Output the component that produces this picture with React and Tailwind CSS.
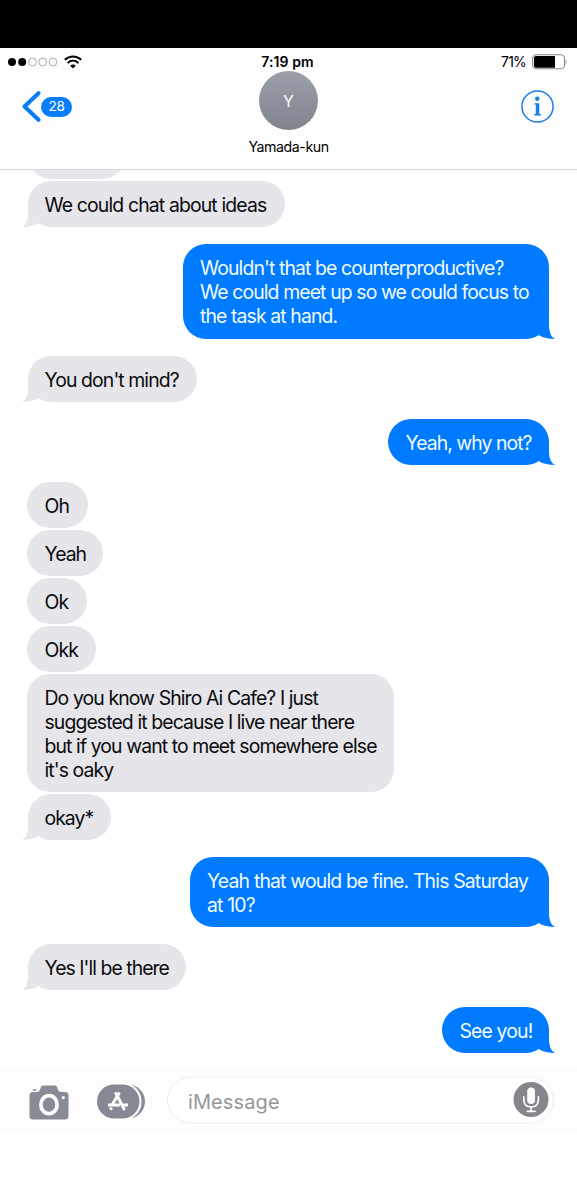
const messages = [
  { lines: ["We could chat about ideas"], tail: true, size: "w-[256.5px] tracking-[-0.85px]", space: "mt-[1.8px]" },
  {
    mine: true,
    lines: ["Wouldn't that be counterproductive?", "We could meet up so we could focus to", "the task at hand."],
    tail: true,
    size: "w-[366.5px] tracking-[-0.88px]",
    space: "mt-[17px]",
  },
  { lines: ["You don't mind?"], tail: true, size: "w-[169px] tracking-[-0.9px]", space: "mt-[17px]" },
  { mine: true, lines: ["Yeah, why not?"], tail: true, size: "w-[161px] tracking-[-0.95px]", space: "mt-[17px]" },
  { lines: ["Oh"], size: "w-[61px] tracking-[-0.9px]", space: "mt-[17px]" },
  { lines: ["Yeah"], size: "w-[76px] tracking-[-1px]", space: "mt-[2px]" },
  { lines: ["Ok"], size: "w-[60px] tracking-[-0.9px]", space: "mt-[2px]" },
  { lines: ["Okk"], size: "w-[69px] tracking-[-0.9px]", space: "mt-[2px]" },
  {
    lines: ["Do you know Shiro Ai Cafe? I just", "suggested it because I live near there", "but if you want to meet somewhere else", "it's oaky"],
    size: "w-[367px] tracking-[-0.89px]",
    space: "mt-[2px]",
  },
  { lines: ["okay*"], tail: true, size: "w-[83px] tracking-[-0.95px]", space: "mt-[2px]" },
  {
    mine: true,
    lines: ["Yeah that would be fine. This Saturday", "at 10?"],
    tail: true,
    size: "w-[359.5px] tracking-[-0.82px]",
    space: "mt-[17px]",
  },
  { lines: ["Yes I'll be there"], tail: true, size: "w-[158px] tracking-[-0.95px]", space: "mt-[17px]" },
  { mine: true, lines: ["See you!"], tail: true, size: "w-[107px] tracking-[-0.85px]", space: "mt-[17px]" },
];

const Tail = ({ mine }) => (
  <svg
    viewBox="-24 -24 30 24"
    className={`absolute bottom-0 h-6 w-[30px] ${mine ? "-right-[6px] text-[#007aff]" : "-left-[6px] -scale-x-100 text-[#e5e5ea]"}`}
  >
    <path fill="currentColor" d="M0-24V-14C0-7 2-2 6 0C0-.2-6-1-10-3.7L-20-23Z" />
  </svg>
);

const Bubble = ({ message }) => {
  const { mine, lines, tail, size, space } = message;
  const theirs = tail ? "ml-[1px] pl-[16.5px] bg-[#e5e5ea] text-[#0b0b0d]" : "pl-[17.5px] bg-[#e5e5ea] text-[#0b0b0d]";
  return (
    <div className={`flex ${mine ? "justify-end" : "justify-start"} ${space}`}>
      <div
        className={`relative rounded-[23px] pt-[12px] pb-[10px] text-[19.4px] leading-[24.06px] whitespace-nowrap ${size} ${
          mine ? "pl-[17.5px] bg-[#007aff] text-[#f2fbff]" : theirs
        }`}
      >
        {tail && <Tail mine={mine} />}
        {lines.map((line) => (
          <div key={line} className="relative">{line}</div>
        ))}
      </div>
    </div>
  );
};

const StatusBar = () => (
  <div className="grid h-[27px] grid-cols-3 items-center pr-[10px] pl-[7px]">
    <div className="flex items-center gap-[5px]">
      <svg viewBox="0 0 52 10" className="h-[10px] w-[52px]">
        <circle cx="5" cy="5" r="4" />
        <circle cx="15.2" cy="5" r="4" />
        <circle cx="25.5" cy="5" r="3.9" fill="none" stroke="#777" strokeWidth=".6" />
        <circle cx="35.7" cy="5" r="3.9" fill="none" stroke="#777" strokeWidth=".6" />
        <circle cx="46" cy="5" r="3.9" fill="none" stroke="#777" strokeWidth=".6" />
      </svg>
      <svg viewBox="0 0 18 14" className="h-[14px] w-[18px]" fill="none" stroke="#000">
        <path d="M.8 4.7C5.6.3 12.4.3 17.2 4.7" strokeWidth="2" />
        <path d="M3.6 7.9C6.8 5 11.2 5 14.4 7.9" strokeWidth="2" />
        <path d="M6.2 10.7C7.9 9.1 10.1 9.1 11.8 10.7L9 13.6Z" fill="#000" stroke="none" />
      </svg>
    </div>
    <div className="pl-[1px] text-center text-[14px] font-semibold tracking-[0.1px] whitespace-nowrap">7:19 pm</div>
    <div className="flex items-center justify-end gap-[6px]">
      <span className="text-[14px] tracking-[-0.8px]">71%</span>
      <svg viewBox="0 0 35 16" className="h-4 w-[35px]">
        <rect x=".7" y=".8" width="31.8" height="14" rx="3.8" fill="#fff" stroke="#888" strokeWidth="1.1" />
        <path d="M4 2H23V13.7H4Q2 13.7 2 11.7V4Q2 2 4 2Z" />
        <path d="M33.6 5.2Q35.4 8 33.6 10.6Z" fill="#888" />
      </svg>
    </div>
  </div>
);

const Header = () => (
  <header className="h-[122px] border-b border-[#d9d9db] bg-[#fdfdfd]">
    <StatusBar />
    <div className="-mt-[4px] grid grid-cols-3 items-start pr-[23px] pl-[22px]">
      <div className="mt-[20px] flex items-center">
        <svg viewBox="0 0 19 31" className="h-[31px] w-[19px]" fill="none" stroke="#087bf5" strokeWidth="4" strokeLinecap="round" strokeLinejoin="round">
          <path d="M16.5 2.2L2.5 15.5L16.5 28.8" />
        </svg>
        <span className="flex h-5 w-[31px] items-center justify-center rounded-full bg-[#0a7dfa] text-[13.5px] tracking-[-0.2px] text-white">28</span>
      </div>
      <div className="flex flex-col items-center pl-[1px]">
        <div className="flex size-[59px] items-center justify-center rounded-full bg-linear-to-b from-[#9a9faa] to-[#7f848e] text-[16px] text-white">Y</div>
        <div className="mt-[7px] text-[14.2px] leading-5 tracking-[-0.45px] whitespace-nowrap">Yamada-kun</div>
      </div>
      <div className="mt-[19px] flex justify-end">
        <svg viewBox="0 0 33 33" className="size-[33px]" fill="#1a7ee6">
          <circle cx="16.5" cy="16.5" r="15.6" fill="none" stroke="#1a7ee6" strokeWidth="1.5" />
          <circle cx="16.3" cy="8.8" r="2.2" />
          <path d="M13.4 13.2H18.3V24.1H19.9V25.5H13.2V24.1H14.8V14.6H13.4Z" />
        </svg>
      </div>
    </div>
  </header>
);

const CameraIcon = () => (
  <svg viewBox="0 0 40 35" className="h-[35px] w-10">
    <path
      fill="#868c96"
      d="M4 7H8.5Q10.3 6.7 11 4.8L12 2Q12.6.5 14.2.5H25.8Q27.4.5 28 2L29 4.8Q29.7 6.7 31.5 7H36Q39.5 7 39.5 10.5V31Q39.5 34.5 36 34.5H4Q.5 34.5.5 31V10.5Q.5 7 4 7Z"
    />
    <rect x="3.5" y="4.2" width="4" height="1.6" rx=".8" fill="#868c96" />
    <ellipse cx="20" cy="19.7" rx="8.1" ry="9" fill="#868c96" stroke="#fdfdfd" strokeWidth="3.8" />
    <circle cx="34.3" cy="12.6" r="1.6" fill="#fff" />
  </svg>
);

const AppsIcon = () => (
  <svg viewBox="0 0 48 35" className="h-[35px] w-12">
    <rect x="5" y=".5" width="43" height="34" rx="17" fill="#868c96" />
    <rect x="0" y="-1" width="44.5" height="37" rx="18" fill="#fdfdfd" />
    <rect x="0" y=".5" width="42.5" height="34" rx="17" fill="#868994" />
    <g fill="none" stroke="#fff" strokeWidth="3">
      <path d="M18.4 8.4L27.6 26" />
      <path d="M22.4 8.4L15.2 20.8" />
      <path d="M11 21H22.8M26.2 21H31" />
      <path d="M14.6 23.6L13.4 25.8" />
    </g>
  </svg>
);

const MessageBar = () => (
  <footer className="flex h-[62px] items-center bg-[#fdfdfd] pt-[4px] pr-[23px] pl-[29px]">
    <CameraIcon />
    <div className="ml-[28px] -mt-[1px]"><AppsIcon /></div>
    <div className="ml-[22px] flex h-[47px] flex-1 -translate-y-[2.5px] items-center justify-between rounded-full border border-[#ececee] bg-white pr-[4px] pl-[20px]">
      <span className="pt-[3px] text-[20px] tracking-[0.1px] text-[#96969a]">iMessage</span>
      <svg viewBox="0 0 36 36" className="size-9">
        <circle cx="18" cy="18" r="17.5" fill="#85858b" />
        <rect x="14.2" y="6" width="7.8" height="16.5" rx="3.9" fill="#fff" />
        <g fill="none" stroke="#fff" strokeWidth="1.7" strokeLinecap="round">
          <path d="M10.8 15.3V18.7Q11.2 25.3 18.1 25.5Q25 25.3 25.4 18.7V15.3M18.1 25.5V29.3M14.3 29.8H22" />
        </g>
      </svg>
    </div>
  </footer>
);

const App = () => {
  return (
    <div className="flex h-[1200px] w-[577px] flex-col overflow-hidden bg-white font-[Inter,Roboto,sans-serif] text-black">
      <div className="h-12 shrink-0 bg-black" />
      <Header />
      <main className="h-[899px] shrink-0 pr-[28px] pl-[27px]">
        <div className="h-[9.5px] overflow-hidden">
          <div className="-mt-[37px] ml-[1px] h-[46px] w-[97px] rounded-[23px] bg-[#e5e5ea]" />
        </div>
        {messages.map((message) => (
          <Bubble key={message.lines[0]} message={message} />
        ))}
      </main>
      <MessageBar />
    </div>
  );
};

export default App;
